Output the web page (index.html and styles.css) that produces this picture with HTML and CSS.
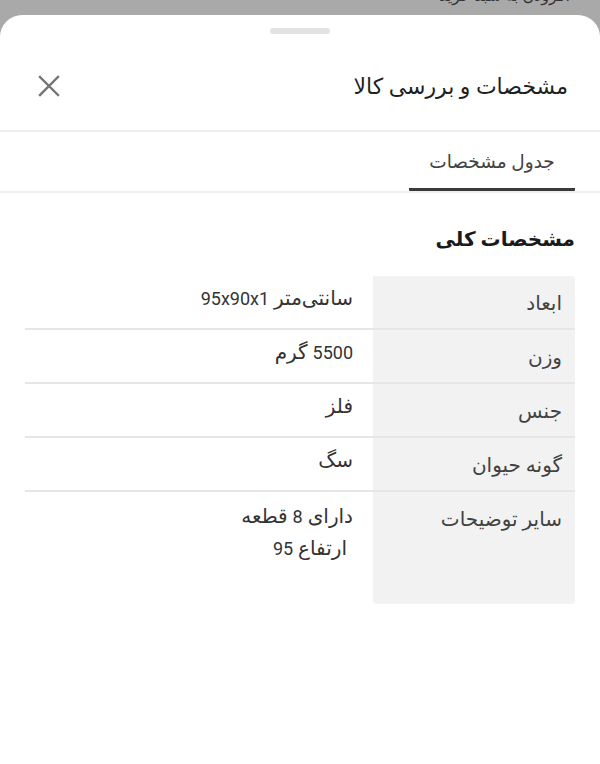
FILE: index.html
```html
<!DOCTYPE html>
<html lang="fa" dir="rtl">
<head>
<meta charset="utf-8">
<title>مشخصات و بررسی کالا</title>
<link rel="stylesheet" href="styles.css">
</head>
<body>
<div class="backdrop"><span class="backdrop-text">افزودن به سبد خرید</span></div>
<div class="sheet">
  <div class="handle"></div>
  <header class="header">
    <h1 class="title">مشخصات و بررسی کالا</h1>
    <button class="close" aria-label="بستن">
      <svg width="22" height="22" viewBox="0 0 22 22"><path d="M2 2 L20 20 M20 2 L2 20" stroke="#757575" stroke-width="2.4" stroke-linecap="square" fill="none"/></svg>
    </button>
  </header>
  <nav class="tabs">
    <div class="tab active">جدول مشخصات</div>
  </nav>
  <section class="content">
    <h2 class="section-title">مشخصات کلی</h2>
    <div class="specs">
      <div class="row first">
        <div class="key">ابعاد</div>
        <div class="val">سانتی‌متر <span class="num">95x90x1</span></div>
      </div>
      <div class="row">
        <div class="key">وزن</div>
        <div class="val"><span class="num">5500</span> گرم</div>
      </div>
      <div class="row">
        <div class="key">جنس</div>
        <div class="val">فلز</div>
      </div>
      <div class="row">
        <div class="key">گونه حیوان</div>
        <div class="val">سگ</div>
      </div>
      <div class="row last">
        <div class="key">سایر توضیحات</div>
        <div class="val multi">
          <div class="line">دارای <span class="num">8</span> قطعه</div>
          <div class="line indent">ارتفاع <span class="num">95</span></div>
        </div>
      </div>
    </div>
  </section>
</div>
</body>
</html>
```
FILE: styles.css
```css
* { box-sizing: border-box; }
html, body { margin: 0; padding: 0; }
body {
  width: 600px;
  height: 764px;
  overflow: hidden;
  background: #a9a9a9;
  font-family: Roboto, "DejaVu Sans", sans-serif;
  color: #333;
}
.backdrop {
  height: 15px;
  position: relative;
  overflow: hidden;
}
.backdrop-text {
  position: absolute;
  top: -14px;
  right: 30px;
  font-size: 16px;
  color: #333;
}
.sheet {
  background: #fff;
  border-radius: 22px 22px 0 0;
  height: 749px;
  direction: rtl;
  padding-top: 13px;
}
.handle {
  width: 60px;
  height: 6px;
  border-radius: 3px;
  background: #e2e2e2;
  margin: 0 auto;
}
.header {
  height: 98px;
  padding: 8px 32px 0 38px;
  display: flex;
  align-items: center;
  justify-content: space-between;
  border-bottom: 2px solid #eeeeee;
}
.title {
  margin: 0;
  font-size: 22px;
  font-weight: 400;
  color: #1f1f1f;
}
.close {
  border: 0;
  background: none;
  padding: 0;
  width: 22px;
  height: 22px;
  display: flex;
}
.tabs {
  display: flex;
  padding-right: 25px;
  border-bottom: 2px solid #eeeeee;
}
.tab {
  width: 166px;
  height: 59px;
  display: flex;
  align-items: center;
  justify-content: center;
  padding-top: 4px;
  font-size: 18.5px;
  color: #424242;
}
.tab.active {
  border-bottom: 3px solid #3a3a3a;
  border-radius: 0 0 1px 1px;
}
.content {
  padding: 0 25px;
}
.section-title {
  margin: 0;
  padding-top: 33px;
  height: 83px;
  font-size: 20px;
  font-weight: 700;
  color: #1a1a1a;
  line-height: 26px;
}
.specs {
  display: flex;
  flex-direction: column;
}
.row {
  display: flex;
  height: 54px;
  border-bottom: 2px solid #e6e6e6;
}
.row.last {
  height: 112px;
  border-bottom: 0;
}
.key {
  width: 202px;
  flex: none;
  background: #f2f2f2;
  padding: 16px 13px 0 0;
  font-size: 20px;
  line-height: 22px;
  color: #424242;
}
.row.first .key { border-radius: 0 4px 0 0; }
.row.last .key { border-radius: 0 0 4px 4px; }
.val {
  flex: 1;
  padding: 11px 20px 0 0;
  font-size: 20px;
  line-height: 22px;
  color: #333;
}
.num {
  font-size: 18px;
}
.val.multi {
  display: flex;
  flex-direction: column;
  gap: 9px;
  padding-top: 13px;
}
.line.indent {
  padding-right: 6px;
}
```
